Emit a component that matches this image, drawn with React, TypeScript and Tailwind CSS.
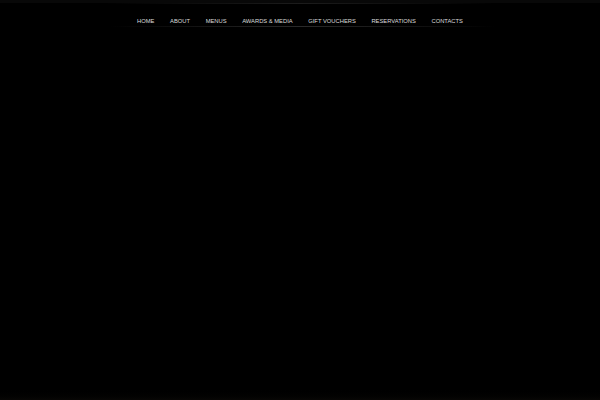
const items = ['HOME', 'ABOUT', 'MENUS', 'AWARDS & MEDIA', 'GIFT VOUCHERS', 'RESERVATIONS', 'CONTACTS']

export default function App() {
  return (
    <div className="w-[600px] h-[400px] bg-black flex flex-col font-['Liberation_Sans',Arial,sans-serif] overflow-hidden">
      <div className="h-[3px] bg-[#080808]" />
      <div className="mx-auto w-[390px] h-px bg-gradient-to-r from-transparent via-[#1c1c1c] to-transparent" />
      <nav className="flex justify-center gap-[15.6px] pt-[14px] pb-[2px]">
        {items.map((item) => (
          <a key={item} className="text-[5.8px] leading-[6px] text-[#dcdcdc]">
            {item}
          </a>
        ))}
      </nav>
      <div className="ml-[110px] w-[385px] h-px bg-gradient-to-r from-transparent via-[#2a2a2a] to-transparent" />
      <div className="flex-1" />
      <div className="h-[12px] bg-gradient-to-b from-black to-[#080705]" />
    </div>
  )
}
